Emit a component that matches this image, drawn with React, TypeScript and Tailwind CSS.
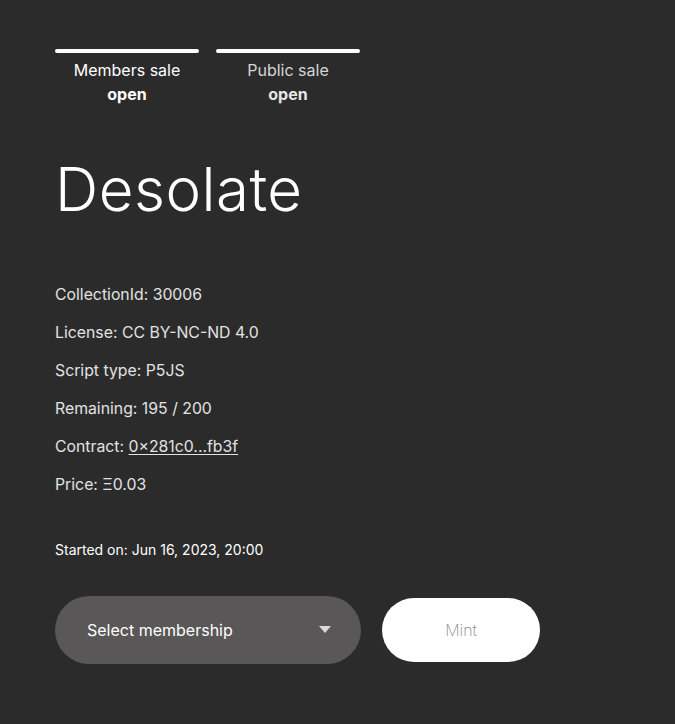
const info = [
  { label: "CollectionId", value: "30006" },
  { label: "License", value: "CC BY-NC-ND 4.0" },
  { label: "Script type", value: "P5JS" },
  { label: "Remaining", value: "195 / 200" },
];

function SaleTab({ title, status, dim }: { title: string; status: string; dim?: boolean }) {
  return (
    <div className="flex w-[144px] flex-col items-center">
      <div className="h-[4px] w-full rounded-full bg-white" />
      <p className={`mt-[7px] text-[16px] leading-[20px] ${dim ? "text-[#d6d6d6]" : "text-white"}`}>{title}</p>
      <p className={`mt-[4px] text-[16px] font-bold leading-[20px] ${dim ? "text-[#e6e6e6]" : "text-white"}`}>{status}</p>
    </div>
  );
}

export default function App() {
  return (
    <div className="min-h-[724px] bg-[#2b2b2b] px-[55px] pt-[49px] font-['Inter',sans-serif] text-white">
      <div className="flex gap-[17px]">
        <SaleTab title="Members sale" status="open" />
        <SaleTab title="Public sale" status="open" dim />
      </div>

      <h1 className="mt-[45px] text-[60px] font-light leading-[80px] tracking-[0.5px]">Desolate</h1>

      <div className="mt-[55px] flex flex-col gap-[16px] text-[15.8px] leading-[22px] text-[#e2e2e2]">
        {info.map((row) => (
          <p key={row.label}>
            {row.label}: {row.value}
          </p>
        ))}
        <p>
          Contract: <span className="underline underline-offset-2">0×281c0...fb3f</span>
        </p>
        <p>Price: Ξ0.03</p>
      </div>

      <p className="mt-[44px] text-[14px] leading-[20px] text-white">Started on: Jun 16, 2023, 20:00</p>

      <div className="mt-[36px] flex items-center gap-[21px]">
        <button className="flex h-[68px] w-[306px] items-center justify-between rounded-full bg-[#595757] pl-[32px] pr-[30px] text-[16px] text-white">
          <span>Select membership</span>
          <svg width="12" height="8" viewBox="0 0 12 8" className="fill-[#d9d9d9]">
            <path d="M0 0h12L6 7z" />
          </svg>
        </button>
        <button className="h-[64px] w-[158px] rounded-full bg-white text-[16px] font-extralight text-[#8a8a8a]">
          Mint
        </button>
      </div>
    </div>
  );
}
